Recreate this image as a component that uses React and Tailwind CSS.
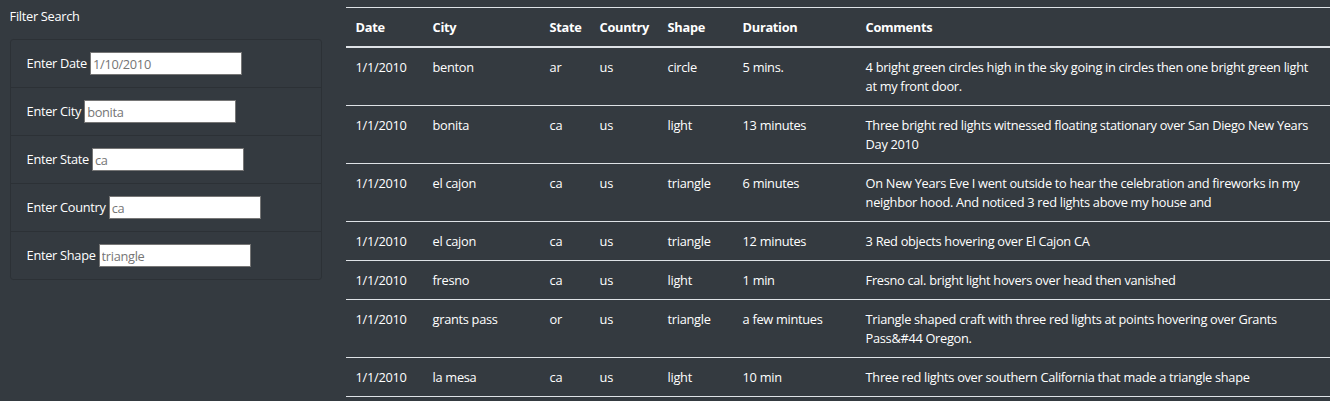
import React from "react";

const filters = [
  { label: "Enter Date", placeholder: "1/10/2010" },
  { label: "Enter City", placeholder: "bonita" },
  { label: "Enter State", placeholder: "ca" },
  { label: "Enter Country", placeholder: "ca" },
  { label: "Enter Shape", placeholder: "triangle" },
];

const sightings = [
  ["1/1/2010", "benton", "ar", "us", "circle", "5 mins.", "4 bright green circles high in the sky going in circles then one bright green light at my front door."],
  ["1/1/2010", "bonita", "ca", "us", "light", "13 minutes", "Three bright red lights witnessed floating stationary over San Diego New Years Day 2010"],
  ["1/1/2010", "el cajon", "ca", "us", "triangle", "6 minutes", "On New Years Eve I went outside to hear the celebration and fireworks in my neighbor hood. And noticed 3 red lights above my house and"],
  ["1/1/2010", "el cajon", "ca", "us", "triangle", "12 minutes", "3 Red objects hovering over El Cajon CA"],
  ["1/1/2010", "fresno", "ca", "us", "light", "1 min", "Fresno cal. bright light hovers over head then vanished"],
  ["1/1/2010", "grants pass", "or", "us", "triangle", "a few mintues", "Triangle shaped craft with three red lights at points hovering over Grants Pass&#44 Oregon."],
  ["1/1/2010", "la mesa", "ca", "us", "light", "10 min", "Three red lights over southern California that made a triangle shape"],
];

const columns = [
  { name: "Date", width: "w-[77px]" },
  { name: "City", width: "w-[117px]" },
  { name: "State", width: "w-[50px]" },
  { name: "Country", width: "w-[68px]" },
  { name: "Shape", width: "w-[75px]" },
  { name: "Duration", width: "w-[123px]" },
  { name: "Comments", width: "" },
];

function FilterPanel() {
  return (
    <div className="w-[346px] shrink-0 px-[9.6px] pt-[7px]">
      <p className="mb-[13px] leading-[19px]">Filter Search</p>
      <ul className="w-[312px] rounded-[3.2px] border border-[#2c3136]">
        {filters.map((f, i) => (
          <li
            key={f.label}
            className={
              "flex items-center px-[16px] " +
              (i < filters.length - 1 ? "h-[48px] border-b border-[#2c3136]" : "h-[47px]")
            }
          >
            <label className="mr-[3px]">{f.label}</label>
            <input
              type="text"
              placeholder={f.placeholder}
              className="h-[23px] w-[152px] border border-[#767676] bg-white px-[2px] text-[12.8px] text-black placeholder:text-[#757575] outline-none"
            />
          </li>
        ))}
      </ul>
    </div>
  );
}

function SightingsTable() {
  return (
    <div className="min-w-0 flex-1 pt-[7px]">
      <table className="w-full table-fixed border-collapse text-left">
        <thead>
          <tr className="border-t border-[#dee2e6]">
            {columns.map((c) => (
              <th
                key={c.name}
                className={
                  c.width +
                  " border-b-2 border-[#dee2e6] px-[9.6px] pb-[9px] pt-[10px] align-bottom font-bold"
                }
              >
                {c.name}
              </th>
            ))}
          </tr>
        </thead>
        <tbody>
          {sightings.map((row, i) => (
            <tr key={i} className="border-b border-[#dee2e6]">
              {row.map((cell, j) => (
                <td key={j} className="px-[9.6px] py-[9.5px] align-top">
                  {cell}
                </td>
              ))}
            </tr>
          ))}
        </tbody>
      </table>
    </div>
  );
}

export default function App() {
  return (
    <div
      className="flex h-[401px] overflow-hidden bg-[#343a40] text-[12.8px] leading-[19px] tracking-[-0.3px] text-white"
      style={{ fontFamily: '"Open Sans", "Noto Sans", sans-serif' }}
    >
      <FilterPanel />
      <SightingsTable />
    </div>
  );
}
